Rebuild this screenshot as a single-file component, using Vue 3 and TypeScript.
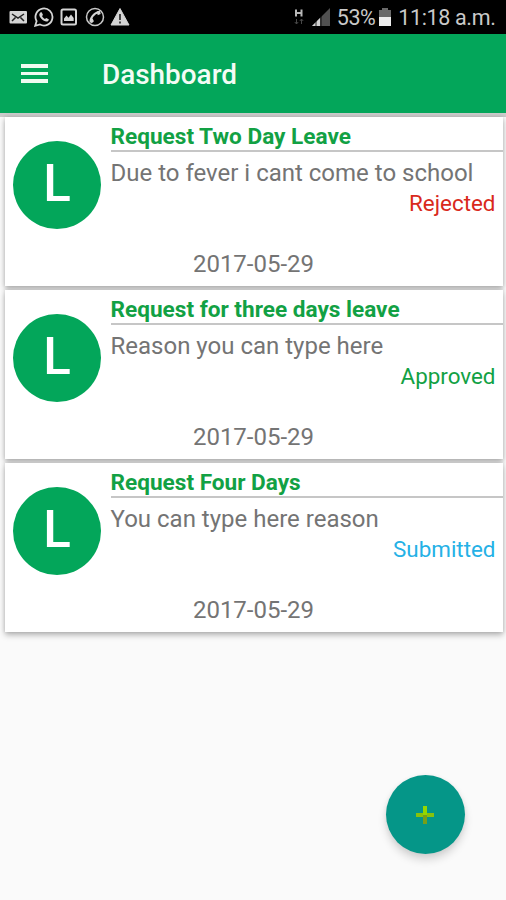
<script setup lang="ts">
interface LeaveRequest {
  id: number
  title: string
  reason: string
  status: 'Rejected' | 'Approved' | 'Submitted'
  date: string
}

const requests: LeaveRequest[] = [
  { id: 1, title: 'Request Two Day Leave', reason: 'Due to fever i cant come to school', status: 'Rejected', date: '2017-05-29' },
  { id: 2, title: 'Request for three days leave', reason: 'Reason you can type here', status: 'Approved', date: '2017-05-29' },
  { id: 3, title: 'Request Four Days', reason: 'You can type here reason', status: 'Submitted', date: '2017-05-29' },
]
</script>

<template>
  <div class="screen">
    <div class="status-bar">
      <div class="notifications">
        <svg width="20" height="20" viewBox="0 0 20 20">
          <rect x="1.500" y="4" width="17.500" height="12.500" rx="1" fill="#d4d4d4" />
          <path d="M4 7l6 4 6-4M4 14l3.500-3.500M16 14l-3.500-3.500" fill="none" stroke="#222" stroke-width="1.500" />
        </svg>
        <svg width="20" height="20" viewBox="0 0 20 20">
          <path d="M1.200 18.800l1.400-4.600A8.500 8.500 0 1 1 6 17.500z" fill="none" stroke="#d4d4d4" stroke-width="1.800" />
          <path d="M6.200 5.600l1.500-.4 1.300 2.700-1 1.200c.7 1.500 1.700 2.300 3 2.900l1.200-1.100 2.600 1.300c0 1.500-1 2.300-2.300 2.300C9.300 14.400 5 10.300 5.300 7.300z" fill="#d4d4d4" />
        </svg>
        <svg width="20" height="20" viewBox="0 0 20 20">
          <rect x="2.500" y="2.500" width="14.500" height="15" rx="1.500" fill="none" stroke="#d4d4d4" stroke-width="2" />
          <path d="M5 14V11.500l2.500-3 2 2.300 2.500-3.300 2.700 3.500v3z" fill="#d4d4d4" />
        </svg>
        <svg width="20" height="20" viewBox="0 0 20 20">
          <circle cx="10" cy="10" r="8.500" fill="none" stroke="#c8c8c8" stroke-width="1.500" />
          <path d="M5.700 15.500C4.600 12 9 5.500 13.800 5.200" fill="none" stroke="#d4d4d4" stroke-width="2" />
          <path d="M4.800 12l2.800-.4 1.300 2.600-2.400 2.200zM12 4.200l3-.4.700 3.200-3 1.300z" fill="#d4d4d4" />
        </svg>
        <svg width="20" height="20" viewBox="0 0 20 20">
          <path d="M10 1.500L19 18H1z" fill="#d4d4d4" stroke="#d4d4d4" stroke-linejoin="round" />
          <path d="M10 7v6M10 14.500v2" stroke="#333" stroke-width="1.800" />
        </svg>
      </div>
      <div class="system">
        <svg class="network" width="10" height="18" viewBox="0 0 10 18">
          <path d="M2 1.500v7M7.500 1.500v7M2 5h6" fill="none" stroke="#b8b8b8" stroke-width="2" />
          <path d="M2.500 11v5M.8 14l1.700 2 1.700-2M7.500 16v-5M5.800 13l1.700-2 1.700 2" fill="none" stroke="#484848" />
        </svg>
        <svg class="signal" width="18" height="18" viewBox="0 0 18 18">
          <path d="M18 0v18H0z" fill="#505050" />
          <path d="M8 10v8H0z" fill="#d0d0d0" />
          <path d="M4 12v6M9 7v11" stroke="#000" stroke-width=".8" />
        </svg>
        <span class="battery-level">53%</span>
        <svg class="battery" width="12" height="18" viewBox="0 0 12 18">
          <path d="M3 0h6v2h3v16H0V2h3z" fill="#696969" />
          <path d="M0 9h12v9H0z" fill="#ededed" />
        </svg>
        <span class="clock">11:18 a.m.</span>
      </div>
    </div>

    <header class="app-bar">
      <button class="menu" aria-label="Menu">
        <span></span><span></span><span></span>
      </button>
      <h1 class="heading">Dashboard</h1>
    </header>

    <main class="list">
      <article v-for="r in requests" :key="r.id" class="card">
        <div class="avatar"><span>L</span></div>
        <div class="body">
          <h2 class="title">{{ r.title }}</h2>
          <p class="reason">{{ r.reason }}</p>
          <p class="status" :class="r.status.toLowerCase()">{{ r.status }}</p>
        </div>
        <time class="date">{{ r.date }}</time>
      </article>
    </main>

    <button class="fab" aria-label="Add">
      <svg width="18" height="18" viewBox="0 0 18 18">
        <path d="M0 7h18v4H0z" fill="#88c20c" />
        <path d="M7 0h4v9H7z" fill="#94d700" />
        <path d="M7 9h4v9H7z" fill="#779f18" />
      </svg>
    </button>
  </div>
</template>

<style>
body {
  margin: 0;
}
</style>

<style scoped>
.screen {
  position: relative;
  width: 506px;
  height: 900px;
  overflow: hidden;
  display: flex;
  flex-direction: column;
  background: #fafafa;
  font-family: Roboto, "Liberation Sans", sans-serif;
}
h1, h2, p {
  margin: 0;
  white-space: nowrap;
}
button {
  border: 0;
  padding: 0;
}
.status-bar {
  flex: none;
  height: 34px;
  box-sizing: border-box;
  padding: 0 10.500px 0 8px;
  display: flex;
  align-items: center;
  justify-content: space-between;
  background: #000;
  color: #c9c9c9;
}
.notifications {
  display: flex;
  gap: 5.500px;
}
.notifications svg {
  display: block;
}
.system {
  display: flex;
  align-items: center;
  font-size: 21.500px;
  line-height: 34px;
  white-space: nowrap;
}
.network {
  margin-right: 8px;
}
.signal {
  margin-right: 7px;
}
.battery-level {
  letter-spacing: -0.500px;
  margin-top: 2px;
}
.battery {
  margin: 0 7px 0 4px;
}
.clock {
  letter-spacing: -0.350px;
  margin-top: 2px;
}
.app-bar {
  flex: none;
  height: 79px;
  box-sizing: border-box;
  padding-left: 21px;
  display: flex;
  align-items: center;
  background: #03a65a;
}
.menu {
  width: 27px;
  display: flex;
  flex-direction: column;
  gap: 4px;
  background: none;
}
.menu span {
  height: 3.700px;
  background: #f0fbf1;
}
.heading {
  margin: 3px 0 0 54px;
  color: #f3fcf5;
  font-size: 27.900px;
  font-weight: 500;
  line-height: 32px;
}
.list {
  display: flex;
  flex-direction: column;
  gap: 4px;
  padding: 4px 3.500px 0 4.500px;
  background: linear-gradient(#cbcbcb 0 4px, transparent 4px);
}
.card {
  height: 169px;
  box-sizing: border-box;
  display: grid;
  grid-template-columns: 106px 1fr;
  grid-template-rows: 132px 30px;
  background: #fff;
  box-shadow: 0 3px 6px rgba(0, 0, 0, 0.280), 0 0 4px rgba(0, 0, 0, 0.120);
}
.avatar {
  width: 88px;
  height: 88px;
  margin: 24px 0 0 8px;
  border-radius: 50%;
  background: #03a65a;
  color: #fff;
  display: flex;
  align-items: center;
  justify-content: center;
  font-size: 51px;
  font-weight: 500;
  line-height: 60px;
}
.avatar span {
  margin: -3px 0 0 1px;
}
.title {
  height: 35px;
  box-sizing: border-box;
  padding-top: 7px;
  border-bottom: 2px solid #c6c6c6;
  color: #12a144;
  font-size: 22.600px;
  font-weight: 700;
  line-height: 26px;
}
.reason {
  margin-top: 7px;
  color: #747474;
  font-size: 24px;
  line-height: 28px;
}
.status {
  padding-right: 7px;
  text-align: right;
  font-size: 22.400px;
  line-height: 32px;
}
.rejected {
  color: #d9291c;
}
.approved {
  color: #12a144;
}
.submitted {
  color: #25b1e6;
}
.date {
  grid-column: 1 / -1;
  text-align: center;
  color: #747474;
  font-size: 24px;
  line-height: 30px;
}
.fab {
  position: absolute;
  left: 385.500px;
  top: 775px;
  width: 79px;
  height: 79px;
  border-radius: 50%;
  background: #059688;
  display: flex;
  align-items: center;
  justify-content: center;
  box-shadow: 0 6px 9px rgba(0, 0, 0, 0.150), 0 1px 5px rgba(0, 0, 0, 0.060);
}
.fab svg {
  display: block;
}
</style>
